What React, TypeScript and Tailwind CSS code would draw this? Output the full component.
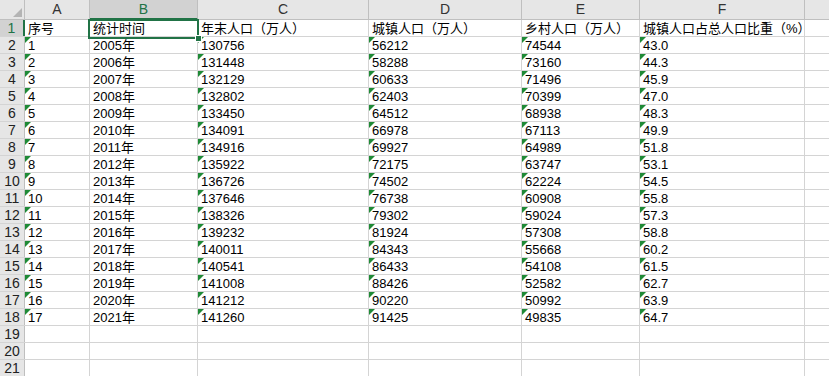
import React from "react";

const widths = ["w-[65px]", "w-[108px]", "w-[171px]", "w-[153px]", "w-[118px]", "w-[165px]"];
const letters = ["A", "B", "C", "D", "E", "F"];
const headers = ["序号", "统计时间", "年末人口（万人）", "城镇人口（万人）", "乡村人口（万人）", "城镇人口占总人口比重（%）"];

const data: string[][] = [
  ["1", "2005年", "130756", "56212", "74544", "43.0"],
  ["2", "2006年", "131448", "58288", "73160", "44.3"],
  ["3", "2007年", "132129", "60633", "71496", "45.9"],
  ["4", "2008年", "132802", "62403", "70399", "47.0"],
  ["5", "2009年", "133450", "64512", "68938", "48.3"],
  ["6", "2010年", "134091", "66978", "67113", "49.9"],
  ["7", "2011年", "134916", "69927", "64989", "51.8"],
  ["8", "2012年", "135922", "72175", "63747", "53.1"],
  ["9", "2013年", "136726", "74502", "62224", "54.5"],
  ["10", "2014年", "137646", "76738", "60908", "55.8"],
  ["11", "2015年", "138326", "79302", "59024", "57.3"],
  ["12", "2016年", "139232", "81924", "57308", "58.8"],
  ["13", "2017年", "140011", "84343", "55668", "60.2"],
  ["14", "2018年", "140541", "86433", "54108", "61.5"],
  ["15", "2019年", "141008", "88426", "52582", "62.7"],
  ["16", "2020年", "141212", "90220", "50992", "63.9"],
  ["17", "2021年", "141260", "91425", "49835", "64.7"],
];

const font = { fontFamily: '"Liberation Sans", "Noto Sans CJK SC", sans-serif' };

function Tri() {
  return (
    <svg className="absolute left-0 top-0" width="6" height="6" viewBox="0 0 6 6">
      <polygon points="0,0 6,0 0,6" fill="#1f8a36" />
    </svg>
  );
}

function Cell({ w, text, tri, children }: { w: string; text?: string; tri?: boolean; children?: React.ReactNode }) {
  return (
    <div className={`relative ${w} shrink-0 h-full border-r border-[#d4d4d4] pl-[3px] pt-[1px] text-[13px] leading-[16px] text-black whitespace-nowrap`}>
      {tri && <Tri />}
      {text}
      {children}
    </div>
  );
}

export default function App() {
  const totalRows = 21;
  return (
    <div className="w-[829px] h-[376px] overflow-hidden bg-white" style={font}>
      {/* column header */}
      <div className="flex h-[20px]">
        <div className="relative w-[25px] shrink-0 h-full bg-[#e6e6e6] border-r border-b border-[#bfbfbf]">
          <svg className="absolute right-[2px] bottom-[2px]" width="9" height="9" viewBox="0 0 9 9">
            <polygon points="9,0 9,9 0,9" fill="#b4b4b4" />
          </svg>
        </div>
        {letters.map((l, i) => (
          <div
            key={l}
            className={`${widths[i]} shrink-0 h-full border-r text-center text-[14px] leading-[19px] ${
              i === 1
                ? "bg-[#d2d2d2] text-[#217346] border-b-2 border-b-[#217346] border-r-[#bfbfbf]"
                : "bg-[#e6e6e6] text-[#333] border-b border-[#bfbfbf]"
            }`}
          >
            {l}
          </div>
        ))}
        <div className="flex-1 h-full bg-[#e6e6e6] border-b border-[#bfbfbf]" />
      </div>
      {Array.from({ length: totalRows }).map((_, r) => {
        const rowNum = r + 1;
        const isHeader = r === 0;
        const rowData = isHeader ? headers : data[r - 1];
        return (
          <div key={r} className="flex h-[17px] border-b border-[#d4d4d4]">
            <div
              className={`w-[25px] shrink-0 h-full text-center text-[14px] leading-[17px] ${
                isHeader
                  ? "bg-[#d2d2d2] text-[#217346] border-r-2 border-[#217346]"
                  : "bg-[#e6e6e6] text-[#222] border-r border-[#bfbfbf]"
              }`}
            >
              {rowNum}
            </div>
            {widths.map((w, c) => {
              const text = rowData ? rowData[c] : "";
              const tri = !!rowData && !isHeader && c !== 1;
              return (
                <Cell key={c} w={w} text={text} tri={tri}>
                  {isHeader && c === 1 && (
                    <div className="absolute left-[-2px] top-[-1px] w-[111px] h-[20px] border-2 border-[#217346] z-10">
                      <div className="absolute right-[-5px] bottom-[-5px] w-[7px] h-[7px] bg-[#217346] border border-white" />
                    </div>
                  )}
                </Cell>
              );
            })}
            <div className="flex-1 h-full" />
          </div>
        );
      })}
    </div>
  );
}
